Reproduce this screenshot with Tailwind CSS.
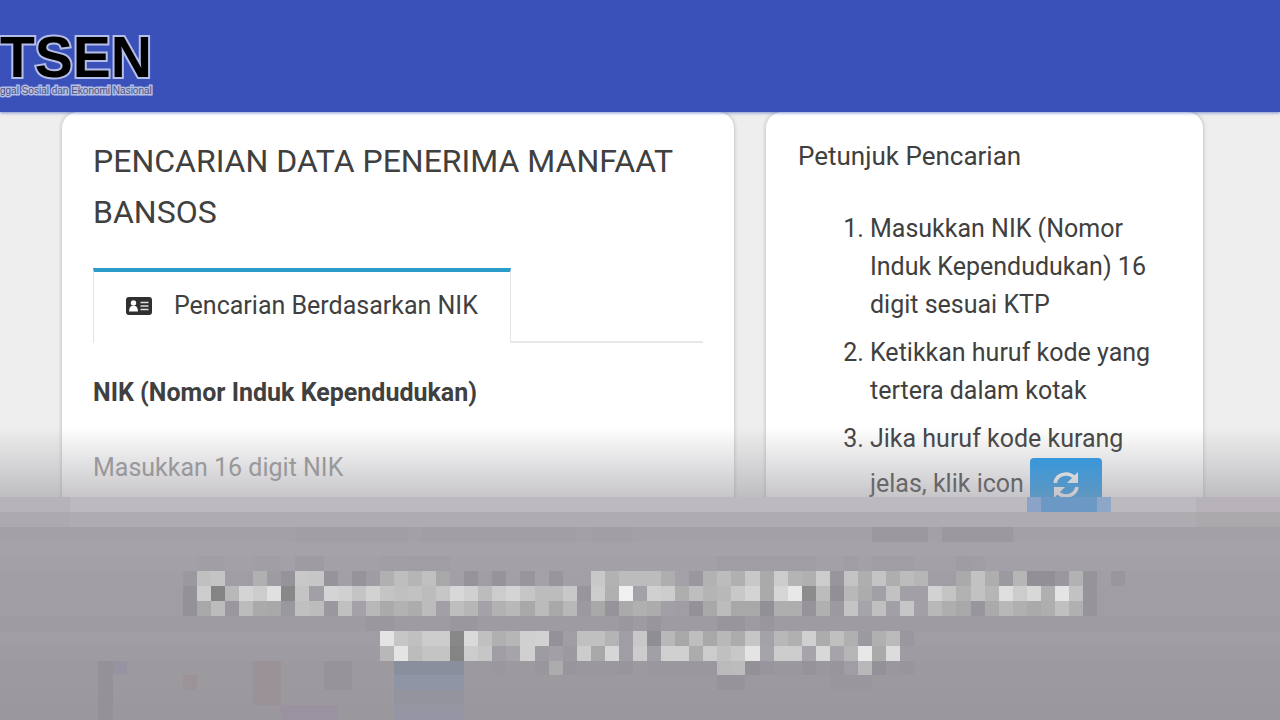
<!DOCTYPE html>
<html lang="id">
<head>
    <meta charset="UTF-8">
    <meta name="viewport" content="width=device-width, initial-scale=1.0">
    <title>Pencarian Data Penerima Manfaat Bansos</title>
    <script src="https://cdn.jsdelivr.net/npm/@tailwindcss/browser@4"></script>
</head>
<body class="bg-[#eeeeee] font-['Roboto',sans-serif] text-[#404040]">
    <div class="relative h-screen overflow-hidden flex flex-col">

        <!-- Header -->
        <header class="relative z-10 shrink-0 bg-[#3b51ba] h-28 pt-[29px] shadow-[0_1px_3px_rgba(59,81,186,0.6)]">
            <a href="#" class="inline-block font-['Liberation_Sans',sans-serif] font-bold text-black whitespace-nowrap">
                <span class="block text-[57px] leading-[57px] [-webkit-text-stroke:4px_#b4bde6] [paint-order:stroke]">TSEN</span>
                <span class="block text-[10px] leading-[10px] font-normal text-[#4a5480] [-webkit-text-stroke:3px_#b4bde6] [paint-order:stroke]">ggal Sosial dan Ekonomi Nasional</span>
            </a>
        </header>

        <main class="flex-1 grid grid-cols-[672fr_437fr] gap-8 pl-[62px] pr-[77px]">
            <!-- Search form -->
            <section class="bg-white rounded-t-2xl shadow-[0_0_4px_rgba(0,0,0,0.25)] px-[31px] pt-6">
                <h1 class="text-[32px] leading-[51px]">PENCARIAN DATA PENERIMA MANFAAT BANSOS</h1>

                <div class="flex mt-[30px]">
                    <button type="button" class="flex items-center gap-[22px] h-[75px] px-8 pb-1 border-t-4 border-x border-t-[#2a9cca] border-x-[#e4e4e4] text-[25px] whitespace-nowrap">
                        <svg class="w-[26px] h-[18px]" viewBox="0 0 26 18">
                            <rect width="26" height="18" rx="3" fill="#2f2f2f"/>
                            <circle cx="7.5" cy="6" r="2.7" fill="#fff"/>
                            <path d="M3 14.500c0-3.500 1.500-5.500 3-5.500h3c1.500 0 3 2 3 5.500z" fill="#fff"/>
                            <path d="M14.500 5.500h8M14.500 9h8M14.500 12.500h8" stroke="#ddd" stroke-width="1.600"/>
                        </svg>
                        Pencarian Berdasarkan NIK
                    </button>
                    <div class="flex-1 border-b-2 border-[#e8e8e8]"></div>
                </div>

                <form>
                    <label for="nik" class="block mt-8 text-[25px] leading-9 font-bold">NIK (Nomor Induk Kependudukan)</label>
                    <input id="nik" type="text" placeholder="Masukkan 16 digit NIK" class="block w-full mt-9 h-10 text-[25px] placeholder:text-[#999999] outline-none">
                </form>
            </section>

            <!-- Search guide -->
            <aside class="bg-white rounded-t-2xl shadow-[0_0_4px_rgba(0,0,0,0.25)] px-8 pt-[25px]">
                <h2 class="text-[26px] leading-[38px]">Petunjuk Pencarian</h2>
                <ol class="list-decimal pl-[72px] mt-[35px] space-y-2.5 text-[25px] leading-[38px] whitespace-nowrap">
                    <li>Masukkan NIK (Nomor<br>Induk Kependudukan) 16<br>digit sesuai KTP</li>
                    <li>Ketikkan huruf kode yang<br>tertera dalam kotak</li>
                    <li>Jika huruf kode kurang<br>jelas, klik icon
                        <button type="button" aria-label="Muat ulang kode" class="inline-flex items-center justify-center align-middle w-[72px] h-[54px] rounded-sm bg-[#1a98ee]">
                            <svg class="w-7 h-7" viewBox="0 0 28 28" fill="none" stroke="#fff" stroke-width="3.500">
                                <path d="M3 12C4 6 9 3 14 3c4 0 6.500 1.500 9 4"/>
                                <path d="M25 16c-1 6-6 9-11 9-4 0-6.500-1.500-9-4"/>
                                <path d="M26 1v11H15z" fill="#fff" stroke="none"/>
                                <path d="M2 27V16h11z" fill="#fff" stroke="none"/>
                            </svg>
                        </button>
                    </li>
                </ol>
            </aside>
        </main>

        <!-- Caption band -->
        <div class="absolute z-20 inset-x-0 bottom-0 pointer-events-none">
            <div class="h-[70px] bg-linear-to-b from-[#98959c]/0 to-[#98959c]/55"></div>
            <svg id="mosaic" class="block w-full h-[223px]" viewBox="0 0 1280 223" preserveAspectRatio="none" shape-rendering="crispEdges"></svg>
        </div>
    </div>

    <script>
        const COLS = 91, ROWS = 15;
        const cellW = 1280 / COLS, cellH = 223 / ROWS;
        const bands = ['#bcb9bf', '#afacb1', '#a3a0a7', '#a5a2a9', '#a3a0a7', '#a19ea5', '#a09da4', '#a09da4',
                       '#9e9ba2', '#a09da4', '#9e9ba2', '#9d9a9f', '#9d9a9f', '#9c999e', '#9b989d'];

        // Grey levels per cell: [row, first column, levels]
        const levels = [
            [2, 21, 'a1 a1 a1 a1 a1 a1 a1 a1 . a1 a1 a1 a1 a1 a1 a1 a1 a1 a1 a1 . a1 a1 a1'],
            [2, 62, '9b 9b 9b 9b . 9b 9b 9b 9b 9b'],
            [4, 14, 'a1 a1 . . a1 a1 . 9e 9e . . . . a1 a1 a0 a0 a0'],
            [4, 51, 'a0 a0 a0 a0 a0 a0 a0 . . a0 . a0 a0 a0 . . . 9f a0'],
            [5, 13, '9b c0 c4 a0 a0 b0 9e 96 c8 c6 96 a2 96 9f b0 be b5 c0 a8 a2 96 a0 96 a2 98 a4 98 a2 a2 c8 b2 bc bc bc ae a4 9a b2 bc b0 c8 aa cc b4 b0 cc 98 c4 ae c4 ae bc b6 a0 a0 aa c2 ae 9c b6 92 92 9a b2 96 . 99'],
            [6, 13, '94 cc 84 b8 d4 cc e0 88 c4 a2 d4 d0 c4 d2 c4 c0 c2 bc c6 d8 d0 bc cc d4 c6 bc bc c8 98 cc b0 f0 a4 d0 cc ae be b4 b8 c8 d4 aa d6 e8 8c bc 92 b8 ac a2 c2 a2 a2 d2 c4 b2 c2 b6 de cc d8 b0 e4 c2 96'],
            [7, 13, '94 a8 bc 9a bc aa a8 9a c0 bc 9a c0 a4 b8 aa b2 ac bc a2 be b6 a4 b2 b8 a8 ba a8 b8 9c a8 96 aa b0 ac a2 a0 94 a8 bc a8 a8 92 ae ae 96 b0 9c c4 a6 c0 a2 c6 a2 b8 ae a8 98 aa b8 b0 aa ae c0 b0 96'],
            [8, 26, '9a 9a . . . . 9a 9a'],
            [8, 44, '9a 9e 98 . . . . 98 98 . 99'],
            [9, 27, 'e4 c6 c0 cc cc 88 da c0 b0 b6 d0 d2 94 a0 c0 c0 b4 a0 c8 90 b8 a8 be a8 b8 ac c6 a4 b8 b0 d0 ac c0 b0 9c b0 ba 9a'],
            [10, 27, 'b8 e4 bc c4 c4 84 cc c6 a0 a6 d0 9e a2 9c cc a8 d6 a0 cc a2 d0 d0 ac cc c0 c8 e4 a6 cc cc a6 d8 a6 b6 e8 aa dc 9e'],
            [11, 35, '9a . . 99 ac 98 9a 9a 9a 98 . 9a 9a 9a 9a 9a ba bc 93 98 9a 9a 96 9a 98 a0 b8 94 9a 98'],
            [12, 51, '96 96 . . . . . . 99 99 99']
        ];

        // Tinted areas: [column, row, columns, rows, colour]
        const tints = [
            [0, 0, 5, 1, '#b7b4b9'], [85, 0, 6, 1, '#b7b3b8'],
            [0, 1, 5, 1, '#acaaae'], [85, 1, 6, 1, '#aca9ad'],
            [73, 0, 1, 1, '#8aa3c6'], [74, 0, 4, 1, '#6c98c5'], [78, 0, 1, 1, '#8ea6c8'],
            [28, 11, 5, 1, '#898f9d'], [28, 12, 5, 1, '#8f95a5'], [28, 13, 5, 1, '#93949e'], [28, 14, 5, 1, '#9695a3'],
            [7, 11, 1, 4, '#949197'], [8, 11, 1, 1, '#9793a2'], [18, 11, 2, 3, '#9b9297'],
            [23, 11, 2, 2, '#969499'], [20, 14, 4, 1, '#9a92a1'], [13, 12, 1, 1, '#9b9398']
        ];

        const svg = document.getElementById('mosaic');

        function cell(col, row, cols, rows, fill) {
            const rect = document.createElementNS('http://www.w3.org/2000/svg', 'rect');
            rect.setAttribute('x', Math.round(col * cellW));
            rect.setAttribute('y', Math.round(row * cellH));
            rect.setAttribute('width', Math.round((col + cols) * cellW) - Math.round(col * cellW));
            rect.setAttribute('height', Math.round((row + rows) * cellH) - Math.round(row * cellH));
            rect.setAttribute('fill', fill);
            svg.appendChild(rect);
        }

        // Dark cells take on the purple of the band behind them
        function grey(hex) {
            const v = parseInt(hex, 16);
            return v > 0x8c && v < 0xa8 ? `rgb(${v}, ${v - 2}, ${v + 4})` : `rgb(${v}, ${v}, ${v + 1})`;
        }

        bands.forEach((fill, row) => cell(0, row, COLS, 1, fill));
        tints.forEach(t => cell(...t));
        levels.forEach(([row, start, values]) => {
            values.split(' ').forEach((v, i) => {
                if (v !== '.') cell(start + i, row, 1, 1, grey(v));
            });
        });
    </script>
</body>
</html>
